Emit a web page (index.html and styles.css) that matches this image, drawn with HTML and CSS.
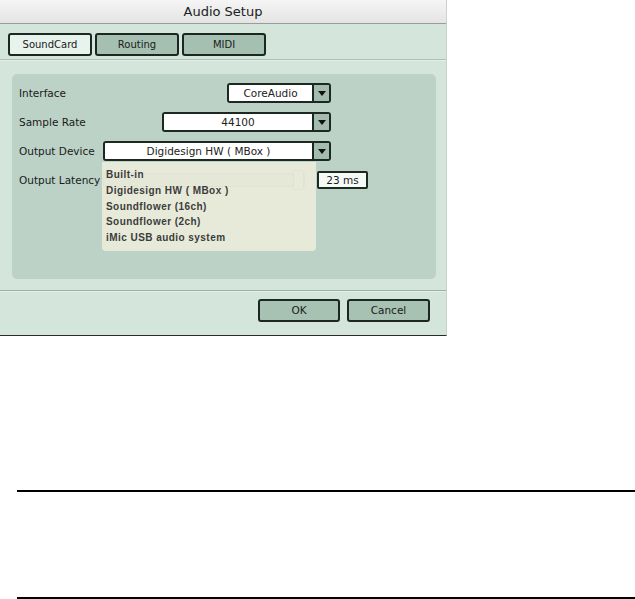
FILE: index.html
```html
<!DOCTYPE html>
<html>
<head>
<meta charset="utf-8">
<title>Audio Setup</title>
<link rel="stylesheet" href="styles.css">
</head>
<body>
<div class="dialog">
  <div class="titlebar">Audio Setup</div>
  <div class="tabs">
    <div class="tab active">SoundCard</div>
    <div class="tab">Routing</div>
    <div class="tab">MIDI</div>
  </div>
  <div class="tab-sep"></div>
  <div class="panel">
    <div class="row">
      <span class="label">Interface</span>
      <div class="select w-interface"><span class="value">CoreAudio</span><span class="arrow"><svg width="8" height="5" viewBox="0 0 8 5"><path d="M0 0H8L4 5Z" fill="#111"/></svg></span></div>
    </div>
    <div class="row">
      <span class="label">Sample Rate</span>
      <div class="select w-rate"><span class="value">44100</span><span class="arrow"><svg width="8" height="5" viewBox="0 0 8 5"><path d="M0 0H8L4 5Z" fill="#111"/></svg></span></div>
    </div>
    <div class="row">
      <span class="label">Output Device</span>
      <div class="select w-device"><span class="value">Digidesign HW ( MBox )</span><span class="arrow"><svg width="8" height="5" viewBox="0 0 8 5"><path d="M0 0H8L4 5Z" fill="#111"/></svg></span></div>
    </div>
    <div class="row">
      <span class="label">Output Latency</span>
      <div class="slider"><div class="thumb"></div></div>
      <div class="ms">23 ms</div>
    </div>
    <div class="menu">
      <div class="item">Built-in</div>
      <div class="item">Digidesign HW ( MBox )</div>
      <div class="item">Soundflower (16ch)</div>
      <div class="item">Soundflower (2ch)</div>
      <div class="item">iMic USB audio system</div>
    </div>
  </div>
  <div class="footer-sep"></div>
  <div class="footer">
    <div class="btn ok">OK</div>
    <div class="btn cancel">Cancel</div>
  </div>
</div>
<div class="rule first"></div>
<div class="rule second"></div>
</body>
</html>
```
FILE: styles.css
```css
html, body {
  margin: 0;
  padding: 0;
  background: #ffffff;
}

body {
  font-family: "DejaVu Sans", "Liberation Sans", sans-serif;
  color: #1a1a1a;
}

.dialog {
  width: 447px;
  background: #d4e5db;
  border-bottom: 1px solid #2a2a2a;
  box-sizing: border-box;
  border-right: 1px solid #c9d2cd;
}

.titlebar {
  height: 23px;
  line-height: 24px;
  text-align: center;
  font-size: 13px;
  color: #202020;
  background: linear-gradient(#f5f5f5, #e4e4e4);
  border-bottom: 1px solid #9c9c9c;
}

.tabs {
  display: flex;
  gap: 3px;
  padding: 9px 0 0 8px;
}

.tab {
  width: 84px;
  height: 23px;
  box-sizing: border-box;
  border: 2px solid #1b2822;
  border-radius: 3px;
  background: #a5c0b1;
  font-size: 10px;
  line-height: 19px;
  text-align: center;
  color: #1a1a1a;
}

.tab.active {
  background: #e8f3ed;
}

.tab-sep {
  margin-top: 3px;
  height: 0;
  border-top: 1px solid #aebfb5;
  border-bottom: 1px solid #e3eee8;
}

.panel {
  position: relative;
  margin: 13px 0 0 12px;
  width: 424px;
  height: 205px;
  box-sizing: border-box;
  padding-top: 9px;
  background: #bcd2c7;
  border-radius: 5px;
  display: flex;
  flex-direction: column;
  gap: 9px;
}

.row {
  display: flex;
  align-items: center;
  height: 20px;
  padding-left: 7px;
  padding-right: 105px;
}

.label {
  font-size: 10.5px;
  color: #1a1a1a;
  white-space: nowrap;
}

.select {
  margin-left: auto;
  height: 20px;
  box-sizing: border-box;
  display: flex;
  border: 2px solid #1c2923;
  border-radius: 3px;
  overflow: hidden;
}

.w-interface { width: 104px; }
.w-rate { width: 169px; }
.w-device { width: 228px; }

.value {
  flex: 1;
  background: #ffffff;
  font-size: 10.5px;
  line-height: 16px;
  text-align: center;
  white-space: nowrap;
  color: #222;
}

.arrow {
  width: 15px;
  border-left: 2px solid #1c2923;
  background: #a3bcaf;
  display: flex;
  align-items: center;
  justify-content: center;
}

.slider {
  margin-left: auto;
  width: 202px;
  height: 14px;
  position: relative;
  background: #b3c6b9;
  border: 1px solid #8fa597;
  box-sizing: border-box;
  border-radius: 2px;
}

.thumb {
  position: absolute;
  right: 0;
  top: -4px;
  width: 11px;
  height: 20px;
  box-sizing: border-box;
  background: #c4d2c4;
  border: 1px solid #8fa597;
  border-radius: 2px;
}

.ms {
  margin-left: 12px;
  margin-right: -37px;
  width: 51px;
  height: 18px;
  box-sizing: border-box;
  border: 2px solid #1c2923;
  border-radius: 2px;
  background: #f6faf7;
  font-size: 10.5px;
  line-height: 14px;
  text-align: center;
}

.menu {
  position: absolute;
  left: 90px;
  top: 88px;
  width: 214px;
  height: 89px;
  box-sizing: border-box;
  padding: 5px 0 0 4px;
  background: rgba(238, 237, 220, 0.86);
  border-radius: 0 0 4px 4px;
}

.item {
  font-family: "Liberation Sans", "DejaVu Sans", sans-serif;
  font-weight: 700;
  font-size: 10px;
  letter-spacing: 0.45px;
  line-height: 15.75px;
  color: #3c3c3c;
  white-space: nowrap;
}

.footer-sep {
  margin-top: 11px;
  height: 0;
  border-top: 1px solid #9fb2a8;
  border-bottom: 1px solid #e3eee8;
}

.footer {
  display: flex;
  justify-content: flex-end;
  gap: 7px;
  padding: 7px 16px 13px 0;
}

.btn {
  height: 23px;
  box-sizing: border-box;
  border: 2px solid #1b2822;
  border-radius: 3px;
  background: #a7c2b3;
  font-size: 10.5px;
  line-height: 19px;
  text-align: center;
}

.btn.ok { width: 82px; }
.btn.cancel { width: 83px; }

.rule {
  margin-left: 17px;
  height: 2px;
  background: #000000;
}

.rule.first { margin-top: 154px; }
.rule.second { margin-top: 105px; }
```
